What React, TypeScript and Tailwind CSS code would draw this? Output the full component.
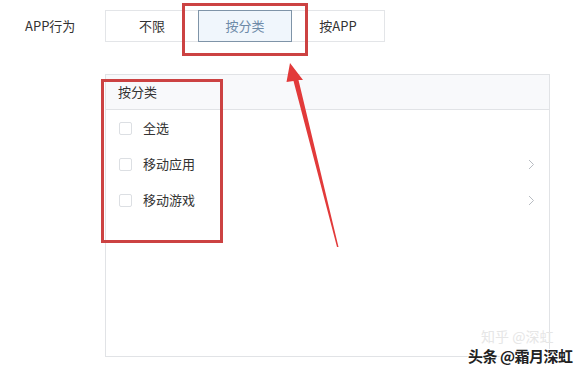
import { useState } from "react";

const font = { fontFamily: '"Noto Sans CJK SC", "Noto Sans", sans-serif' };

const options = ["不限", "按分类", "按APP"];
const categories = [
  { name: "全选", arrow: false },
  { name: "移动应用", arrow: true },
  { name: "移动游戏", arrow: true },
];

export default function App() {
  const [mode, setMode] = useState("按分类");
  const [checked, setChecked] = useState<string[]>([]);

  const toggle = (name: string) =>
    setChecked((prev) => (prev.includes(name) ? prev.filter((n) => n !== name) : [...prev, name]));

  return (
    <div className="relative w-[586px] h-[374px] bg-white overflow-hidden text-[13px] text-[#333]" style={font}>
      {/* APP behaviour row */}
      <div className="flex items-center pt-[10px] pl-[25px]">
        <span className="w-[80px] leading-[32px]">APP行为</span>
        <div className="flex h-[32px] w-[280px] border border-[#e3e5e8] bg-white">
          {options.map((o) => (
            <button
              key={o}
              onClick={() => setMode(o)}
              className={`flex-1 -my-px h-[32px] leading-[30px] ${
                mode === o
                  ? "border border-[#7f94a8] bg-[#f0f6fc] text-[#6d8aa8]"
                  : "text-[#333]"
              }`}
            >
              {o}
            </button>
          ))}
        </div>
      </div>

      {/* Category panel */}
      <div className="ml-[105px] mt-[32px] w-[445px] h-[283px] border border-[#e1e3e6]">
        <div className="h-[35px] bg-[#f8f9fb] border-b border-[#e1e3e6] pl-[12px] leading-[34px]">按分类</div>
        <div>
          {categories.map((c) => (
            <div
              key={c.name}
              onClick={() => toggle(c.name)}
              className="flex items-center h-[36px] pl-[13px] pr-[14px] cursor-pointer"
            >
              <span
                className={`w-[13px] h-[13px] border border-[#dcdfe3] rounded-[2px] ${
                  checked.includes(c.name) ? "bg-[#6d8aa8]" : "bg-white"
                }`}
              />
              <span className="ml-[11px] flex-1">{c.name}</span>
              {c.arrow && (
                <svg width="7" height="11" viewBox="0 0 7 11" fill="none" stroke="#b8bcc2" strokeWidth="1">
                  <path d="M1 1l4.5 4.5L1 10" />
                </svg>
              )}
            </div>
          ))}
        </div>
      </div>

      {/* Annotations */}
      <div className="absolute left-[182px] top-[3px] w-[126px] h-[53px] border-[3px] border-[#cc4242]" />
      <div className="absolute left-[101px] top-[79px] w-[122px] h-[164px] border-[3px] border-[#cc4242]" />
      <svg className="absolute left-0 top-0" width="586" height="374" viewBox="0 0 586 374">
        <path d="M290 63 L303 80 L298.5 80 L338.5 247 L337 247 L293.5 81 L286.5 82 Z" fill="#e23a3a" />
      </svg>

      {/* Watermark */}
      <div className="absolute left-[481px] top-[327px] text-[14px] leading-[18px] text-[#e6e6e6]">知乎 @深虹</div>
      <div
        className="absolute left-[468px] top-[346px] text-[15px] leading-[20px] font-bold text-[#222] tracking-[-0.5px]"
        style={{ textShadow: "1px 1px 0 #fff, -1px -1px 0 #fff, 1px -1px 0 #fff, -1px 1px 0 #fff" }}
      >
        头条 @霜月深虹
      </div>
    </div>
  );
}
